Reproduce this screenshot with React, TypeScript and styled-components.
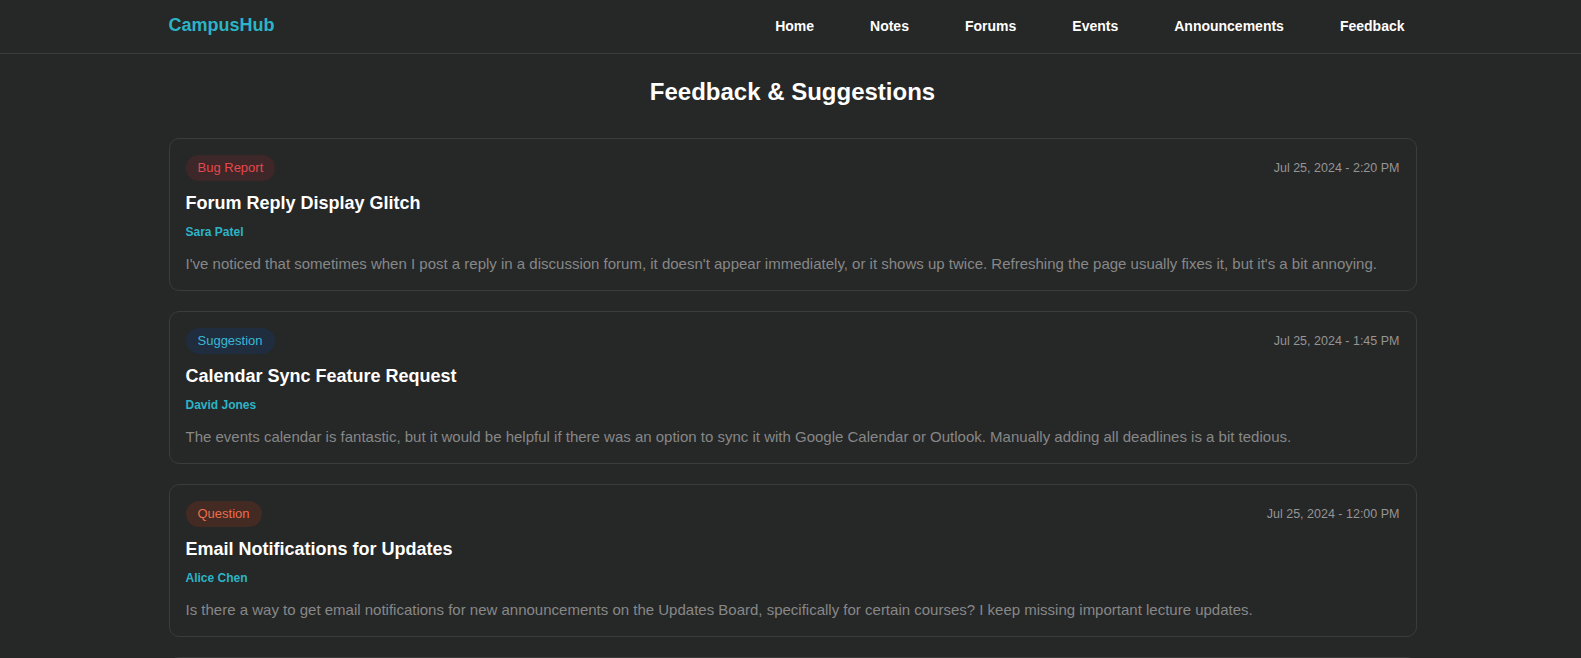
import { createGlobalStyle, styled } from "styled-components";

const GlobalStyle = createGlobalStyle`
    html, body {
        margin: 0;
        padding: 0;
        background-color: #262727;
        font-family: "Liberation Sans", Arial, sans-serif;
        color: #ffffff;
    }
    * {
        box-sizing: border-box;
    }
`;

const NavBar = styled.header`
    height: 54px;
    border-bottom: 1px solid #3b3c3c;
    div.inner {
        max-width: 1280px;
        height: 53px;
        margin: 0 auto;
        padding: 0 14px 2px 18px;
        display: flex;
        align-items: center;
        justify-content: space-between;
    }
    span.logo {
        font-size: 18px;
        font-weight: bold;
        color: #2cb4c6;
    }
    nav {
        display: flex;
        gap: 56px;
        padding-right: 12px;
        a {
            font-size: 14px;
            font-weight: bold;
            color: #ffffff;
            text-decoration: none;
        }
    }
`;

const Main = styled.main`
    max-width: 1280px;
    margin: 0 auto;
    padding: 22px 14px 20px 18px;
    h1 {
        margin: 0 0 30px;
        text-align: center;
        font-size: 24px;
        line-height: 32px;
        font-weight: bold;
        color: #ffffff;
    }
`;

const List = styled.div`
    display: flex;
    flex-direction: column;
    gap: 20px;
`;

const Card = styled.article`
    border: 1px solid #3a3b3b;
    border-radius: 10px;
    padding: 16px 16px 15px;
    div.top {
        display: flex;
        align-items: center;
        justify-content: space-between;
        height: 26px;
    }
    span.date {
        font-size: 12.5px;
        color: #959595;
    }
    h2 {
        margin: 8px 0 0;
        font-size: 18px;
        line-height: 28px;
        font-weight: bold;
        color: #ffffff;
    }
    span.author {
        display: block;
        margin-top: 6px;
        font-size: 12px;
        line-height: 18px;
        font-weight: bold;
        color: #2cb4c6;
    }
    p {
        margin: 12px 0 0;
        font-size: 15px;
        line-height: 22px;
        color: #878888;
    }
`;

type Kind = "bug" | "suggestion" | "question";

const badgeColors: Record<Kind, { bg: string; fg: string }> = {
    bug: { bg: "#3d2728", fg: "#e5484d" },
    suggestion: { bg: "#1f2d3f", fg: "#3ab7d4" },
    question: { bg: "#432a22", fg: "#ee6c4d" },
};

const Badge = styled.span<{ $kind: Kind }>`
    display: inline-flex;
    align-items: center;
    height: 26px;
    padding: 0 12px 1px;
    border-radius: 13px;
    font-size: 13px;
    background-color: ${({ $kind }) => badgeColors[$kind].bg};
    color: ${({ $kind }) => badgeColors[$kind].fg};
`;

type Feedback = {
    kind: Kind;
    label: string;
    date: string;
    title: string;
    author: string;
    text: string;
};

const items: Feedback[] = [
    {
        kind: "bug",
        label: "Bug Report",
        date: "Jul 25, 2024 - 2:20 PM",
        title: "Forum Reply Display Glitch",
        author: "Sara Patel",
        text: "I've noticed that sometimes when I post a reply in a discussion forum, it doesn't appear immediately, or it shows up twice. Refreshing the page usually fixes it, but it's a bit annoying.",
    },
    {
        kind: "suggestion",
        label: "Suggestion",
        date: "Jul 25, 2024 - 1:45 PM",
        title: "Calendar Sync Feature Request",
        author: "David Jones",
        text: "The events calendar is fantastic, but it would be helpful if there was an option to sync it with Google Calendar or Outlook. Manually adding all deadlines is a bit tedious.",
    },
    {
        kind: "question",
        label: "Question",
        date: "Jul 25, 2024 - 12:00 PM",
        title: "Email Notifications for Updates",
        author: "Alice Chen",
        text: "Is there a way to get email notifications for new announcements on the Updates Board, specifically for certain courses? I keep missing important lecture updates.",
    },
    {
        kind: "suggestion",
        label: "Suggestion",
        date: "Jul 24, 2024 - 5:10 PM",
        title: "Dark Mode for Notes Viewer",
        author: "Mark Liu",
        text: "Reading long notes at night is hard on the eyes. A dark theme option in the notes viewer would be great.",
    },
];

const links = ["Home", "Notes", "Forums", "Events", "Announcements", "Feedback"];

export default function App() {
    return (<>
        <GlobalStyle />
        <NavBar>
            <div className="inner">
                <span className="logo">CampusHub</span>
                <nav>
                    {links.map((l) => <a key={l} href="#">{l}</a>)}
                </nav>
            </div>
        </NavBar>
        <Main>
            <h1>Feedback &amp; Suggestions</h1>
            <List>
                {items.map((it) => (
                    <Card key={it.title}>
                        <div className="top">
                            <Badge $kind={it.kind}>{it.label}</Badge>
                            <span className="date">{it.date}</span>
                        </div>
                        <h2>{it.title}</h2>
                        <span className="author">{it.author}</span>
                        <p>{it.text}</p>
                    </Card>
                ))}
            </List>
        </Main>
    </>);
}
